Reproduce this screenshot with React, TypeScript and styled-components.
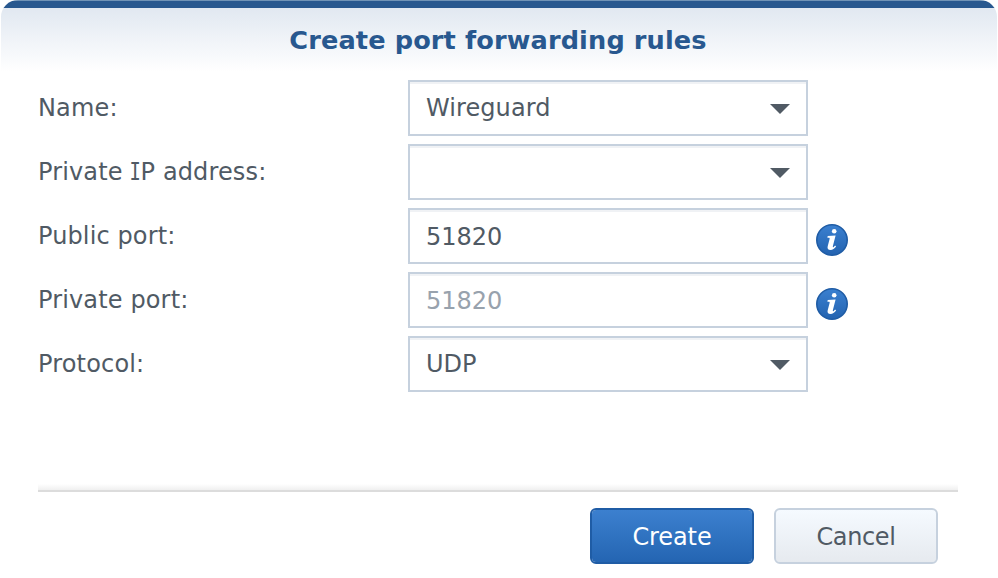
import React from "react";
import styled, { createGlobalStyle, css } from "styled-components";

const Global = createGlobalStyle`
  * { box-sizing: border-box; }
  html, body { margin: 0; padding: 0; background: #fff; }
  body { font-family: Verdana, "DejaVu Sans", sans-serif; color: #505a64; overflow: hidden; }
`;

const Dialog = styled.main`
  width: 998px;
  height: 578px;
  display: flex;
  flex-direction: column;
  background: #fff;
`;

const Header = styled.header`
  height: 80px;
  flex: none;
  display: flex;
  justify-content: center;
  margin: 0 1px;
  border-radius: 17px 17px 0 0;
  background:
    linear-gradient(#7093b6, #7093b6) 0 0 / 100% 1px no-repeat,
    linear-gradient(#28588f, #28588f) 0 0 / 100% 8px no-repeat,
    linear-gradient(#e1e8f1 8px, #ffffff 72px);
`;

const Title = styled.h1`
  margin: 23px 2px 0 0;
  font-size: 25.6px;
  line-height: 34px;
  font-weight: 700;
  letter-spacing: 0.13px;
  color: #28588f;
  white-space: nowrap;
`;

const Form = styled.form`
  display: grid;
  gap: 8px;
  padding: 0 38px;
`;

const Row = styled.div`
  display: grid;
  grid-template-columns: 370px 400px 32px;
  height: 56px;
`;

const Label = styled.label<{ $spacing: number }>`
  padding-top: 12px;
  font-size: 24px;
  line-height: 32px;
  letter-spacing: ${(p) => p.$spacing}px;
  white-space: nowrap;
`;

/* Capital I with slab serifs, narrowed to sit among proportional letters. */
const SlabI = styled.span`
  display: inline-block;
  margin: 0 -2.2px;
  height: 32px;
  vertical-align: top;
  font-family: "DejaVu Sans Mono", monospace;
  letter-spacing: 0;
  transform: scaleX(0.78);
`;

const Field = styled.div<{ $muted?: boolean; $spacing: number; $text: boolean }>`
  display: flex;
  align-items: flex-start;
  justify-content: space-between;
  padding: ${(p) => (p.$text ? 11 : 10)}px 16px 0;
  border: 2px solid #c6d1de;
  background: #fff;
  box-shadow: inset 0 2px 0 #f0f2f5;
  font-size: 24px;
  line-height: 32px;
  letter-spacing: ${(p) => p.$spacing}px;
  color: ${(p) => (p.$muted ? "#98a2ad" : "#505a64")};
`;

const Arrow = styled.svg`
  width: 20px;
  height: 10px;
  margin: 12px 0 0 auto;
  fill: #505a64;
`;

const Info = styled.svg`
  width: 32px;
  height: 32px;
  margin: 16px 0 0 8px;
`;

const Divider = styled.div`
  height: 8px;
  margin: 92px 40px 0 38px;
  border-bottom: 2px solid #dcdcdc;
  background: linear-gradient(#ffffff, #f0f0f0);
`;

const Footer = styled.footer`
  display: flex;
  justify-content: flex-end;
  gap: 20px;
  padding: 16px 60px 0 0;
`;

const Button = styled.button<{ $primary?: boolean; $spacing: number }>`
  width: 164px;
  height: 56px;
  padding: 1px 0 0;
  border-radius: 6px;
  font-family: inherit;
  font-size: 24px;
  line-height: 32px;
  letter-spacing: ${(p) => p.$spacing}px;
  ${(p) =>
    p.$primary
      ? css`
          border: 2px solid #1f5ca5;
          background: linear-gradient(#3c80cf, #2465b2) padding-box;
          color: #fff;
        `
      : css`
          border: 2px solid #c6d1de;
          background: linear-gradient(#f5faff, #e6eaef) padding-box;
          color: #505a64;
        `}
`;

function DropArrow() {
  return (
    <Arrow viewBox="0 0 20 10" aria-hidden="true">
      <path d="M0 0h20L10 10z" />
    </Arrow>
  );
}

function InfoIcon({ id }: { id: string }) {
  return (
    <Info viewBox="0 0 32 32" aria-label="Information">
      <defs>
        <linearGradient id={id} x1="0" y1="0" x2="0" y2="1">
          <stop offset="0" stopColor="#3b80d0" />
          <stop offset="1" stopColor="#2363b0" />
        </linearGradient>
      </defs>
      <circle cx="16" cy="16" r="15.2" fill={`url(#${id})`} stroke="#1f5ca5" strokeWidth="1.6" />
      <circle cx="18.2" cy="7.2" r="2.3" fill="#fff" />
      <path
        d="M11.7 12 19.6 11.4 16.9 22c-.3 1.2.1 1.5.8.9l1.4-1.3 1 .9c-1.7 2.2-3.5 3.5-5.5 3.5-2.6 0-3.5-1.4-2.9-3.8l1.9-7.1c.2-1 0-1.4-.8-1.4h-1.4z"
        fill="#fff"
      />
    </Info>
  );
}

interface RowData {
  label: React.ReactNode;
  labelSpacing: number;
  value: string;
  valueSpacing: number;
  kind: "select" | "text";
  muted?: boolean;
}

const rows: RowData[] = [
  { label: "Name:", labelSpacing: 0.15, value: "Wireguard", valueSpacing: 0.08, kind: "select" },
  {
    label: <>Private <SlabI>I</SlabI>P address:</>,
    labelSpacing: 0.14,
    value: "",
    valueSpacing: 0,
    kind: "select",
  },
  { label: "Public port:", labelSpacing: 0.12, value: "51820", valueSpacing: 0, kind: "text" },
  { label: "Private port:", labelSpacing: 0.14, value: "51820", valueSpacing: 0, kind: "text", muted: true },
  { label: "Protocol:", labelSpacing: 0.17, value: "UDP", valueSpacing: 0, kind: "select" },
];

export default function App() {
  return (
    <Dialog>
      <Global />
      <Header>
        <Title>Create port forwarding rules</Title>
      </Header>
      <Form>
        {rows.map((r, i) => (
          <Row key={i}>
            <Label $spacing={r.labelSpacing}>{r.label}</Label>
            <Field $muted={r.muted} $spacing={r.valueSpacing} $text={r.kind === "text"}>
              <span>{r.value}</span>
              {r.kind === "select" && <DropArrow />}
            </Field>
            {r.kind === "text" && <InfoIcon id={`info-${i}`} />}
          </Row>
        ))}
      </Form>
      <Divider />
      <Footer>
        <Button type="button" $primary $spacing={-0.1}>Create</Button>
        <Button type="button" $spacing={-0.35}>Cancel</Button>
      </Footer>
    </Dialog>
  );
}
